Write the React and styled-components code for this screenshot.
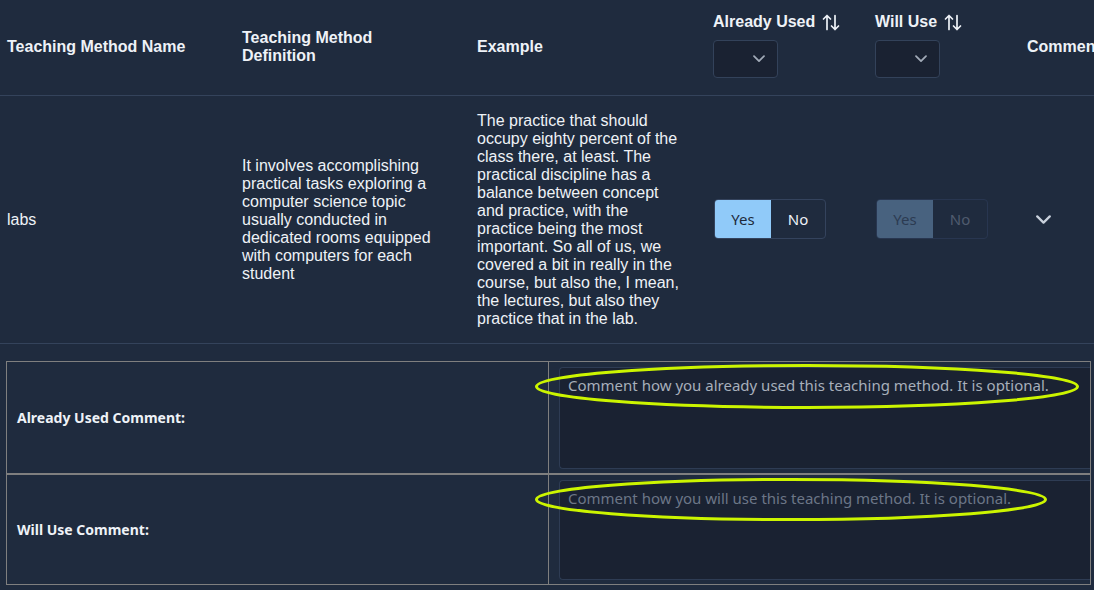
import React from "react";
import styled, { createGlobalStyle } from "styled-components";

const GlobalStyle = createGlobalStyle`
  body {
    margin: 0;
    background: #1f2b3e;
    color: #e6ebf2;
    font-family: "Liberation Sans", Arial, sans-serif;
    overflow: hidden;
  }
`;

const COLUMNS = "235px 235px 236px 162px 152px 200px";

const Page = styled.div`
  width: 1094px;
  height: 590px;
  overflow: hidden;
`;

const HeaderRow = styled.div`
  display: grid;
  grid-template-columns: ${COLUMNS};
  height: 95px;
  align-items: center;
  border-bottom: 1px solid #34435b;
`;

const BodyRow = styled.div`
  display: grid;
  grid-template-columns: ${COLUMNS};
  height: 247px;
  align-items: center;
  border-bottom: 1px solid #34435b;
`;

const HeadCell = styled.div`
  padding: 0 20px 0 7px;
  margin-top: -2px;
  font-size: 16px;
  font-weight: 700;
  line-height: 18px;
  color: #eef2f7;
  white-space: ${(p) => (p.$nowrap ? "nowrap" : "normal")};
`;

const Cell = styled.div`
  padding: 0 20px 0 7px;
  font-size: 16px;
  line-height: 18px;
  color: #eef2f7;
`;

const FilterHead = styled.div`
  display: flex;
  flex-direction: column;
  align-items: flex-start;
  gap: 9px;
  padding-left: 7px;
  margin-top: -4px;
`;

const SortLabel = styled.div`
  display: flex;
  align-items: center;
  gap: 7px;
  font-size: 16px;
  font-weight: 700;
  line-height: 18px;
  color: #eef2f7;
  white-space: nowrap;
`;

const Select = styled.div`
  box-sizing: border-box;
  width: 65px;
  height: 38px;
  background: #1a2232;
  border: 1px solid #33425a;
  border-radius: 4px;
  display: flex;
  align-items: center;
  justify-content: flex-end;
  padding-right: 12px;
`;

const ToggleGroup = styled.div`
  display: inline-flex;
  margin: -1px 0 0 1px;
  border: 1px solid ${(p) => (p.$disabled ? "#283650" : "#34435d")};
  border-radius: 4px;
  overflow: hidden;
`;

const ToggleButton = styled.button`
  width: ${(p) => p.$w}px;
  height: 38px;
  border: none;
  margin: 0;
  padding: 0;
  font-family: "Noto Sans", "Open Sans", sans-serif;
  font-size: 15px;
  background: ${(p) =>
    p.$active ? (p.$disabled ? "#48627f" : "#90caf9") : "transparent"};
  color: ${(p) =>
    p.$disabled
      ? p.$active
        ? "#2c3b52"
        : "#4f5b6e"
      : p.$active
      ? "#1e2a3c"
      : "#eef2f7"};
`;

const ExpandCell = styled.div`
  padding-left: 16px;
  display: flex;
  align-items: center;
`;

const Details = styled.div`
  margin: 17px 0 0 6px;
  width: 1084px;
  display: grid;
  grid-template-columns: 542px 1fr;
  grid-auto-rows: 111px;
  border: 1px solid #7f7f7f;
  border-right-width: 0;
`;

const LabelCell = styled.div`
  display: flex;
  align-items: center;
  padding-left: 10px;
  font-family: "Noto Sans", "Open Sans", sans-serif;
  font-size: 14px;
  font-weight: 700;
  color: #eef2f7;
  border-right: 1px solid #7f7f7f;
  border-top: ${(p) => (p.$first ? "none" : "2px solid #7f7f7f")};
`;

const InputCell = styled.div`
  padding: 5px 0 4px 10px;
  border-top: ${(p) => (p.$first ? "none" : "2px solid #7f7f7f")};
  border-right: 1px solid #7f7f7f;
  display: flex;
`;

const CommentField = styled.div`
  position: relative;
  flex: 1;
  display: flex;
`;

const CommentBox = styled.textarea`
  flex: 1;
  box-sizing: border-box;
  margin: 0;
  resize: none;
  background: #1a2232;
  border: 1px solid #2e3c54;
  border-right: none;
  border-radius: 4px 0 0 4px;
  padding: 6px 8px;
  font-family: "Noto Sans", "Open Sans", sans-serif;
  font-size: 15px;
  line-height: 22px;
  color: #dfe5ee;
  outline: none;

  &::placeholder {
    color: ${(p) => (p.disabled ? "#6c7687" : "#a7afbb")};
  }
`;

const Highlight = styled.svg`
  position: absolute;
  left: ${(p) => p.$left}px;
  top: ${(p) => p.$top}px;
  pointer-events: none;
  overflow: visible;
`;

function SortIcon() {
  return (
    <svg width="18" height="17" viewBox="0 0 18 17" fill="none" stroke="#eef2f7" strokeWidth="1.7" strokeLinecap="round" strokeLinejoin="round">
      <path d="M5 15.5V1.5M1.5 5 5 1.5 8.5 5" />
      <path d="M13 1.5v14M9.5 12 13 15.5 16.5 12" />
    </svg>
  );
}

function Chevron({ color, size = 12 }) {
  return (
    <svg width={size} height={size * 0.6} viewBox="0 0 12 7" fill="none" stroke={color} strokeWidth="1.8" strokeLinecap="round" strokeLinejoin="round">
      <path d="M1 1l5 5 5-5" />
    </svg>
  );
}

function Toggle({ value, disabled }) {
  return (
    <ToggleGroup $disabled={disabled}>
      <ToggleButton $w={56} $active={value === "yes"} $disabled={disabled}>Yes</ToggleButton>
      <ToggleButton $w={54} $active={value === "no"} $disabled={disabled}>No</ToggleButton>
    </ToggleGroup>
  );
}

function Ellipse({ left, top, width, height }) {
  return (
    <Highlight $left={left} $top={top} width={width} height={height}>
      <ellipse cx={width / 2} cy={height / 2} rx={width / 2 - 1.5} ry={height / 2 - 1.5} fill="none" stroke="#ccf500" strokeWidth="3" />
    </Highlight>
  );
}

export default function App() {
  return (
    <Page>
      <GlobalStyle />
      <HeaderRow>
        <HeadCell $nowrap>Teaching Method Name</HeadCell>
        <HeadCell>Teaching Method Definition</HeadCell>
        <HeadCell>Example</HeadCell>
        <FilterHead>
          <SortLabel>Already Used <SortIcon /></SortLabel>
          <Select><Chevron color="#a1aab7" /></Select>
        </FilterHead>
        <FilterHead>
          <SortLabel>Will Use <SortIcon /></SortLabel>
          <Select><Chevron color="#a1aab7" /></Select>
        </FilterHead>
        <HeadCell $nowrap>Comments</HeadCell>
      </HeaderRow>

      <BodyRow>
        <Cell>labs</Cell>
        <Cell>
          It involves accomplishing practical tasks exploring a computer science
          topic usually conducted in dedicated rooms equipped with computers for
          each student
        </Cell>
        <Cell>
          The practice that should occupy eighty percent of the class there, at
          least. The practical discipline has a balance between concept and
          practice, with the practice being the most important. So all of us, we
          covered a bit in really in the course, but also the, I mean, the
          lectures, but also they practice that in the lab.
        </Cell>
        <Cell>
          <Toggle value="yes" />
        </Cell>
        <Cell>
          <Toggle value="yes" disabled />
        </Cell>
        <ExpandCell>
          <Chevron color="#c9d1dc" size={15} />
        </ExpandCell>
      </BodyRow>

      <Details>
        <LabelCell $first>Already Used Comment:</LabelCell>
        <InputCell $first>
          <CommentField>
            <CommentBox placeholder="Comment how you already used this teaching method. It is optional." />
            <Ellipse left={-24} top={-3} width={544} height={45} />
          </CommentField>
        </InputCell>
        <LabelCell>Will Use Comment:</LabelCell>
        <InputCell>
          <CommentField>
            <CommentBox disabled placeholder="Comment how you will use this teaching method. It is optional." />
            <Ellipse left={-24} top={-2} width={512} height={43} />
          </CommentField>
        </InputCell>
      </Details>
    </Page>
  );
}
